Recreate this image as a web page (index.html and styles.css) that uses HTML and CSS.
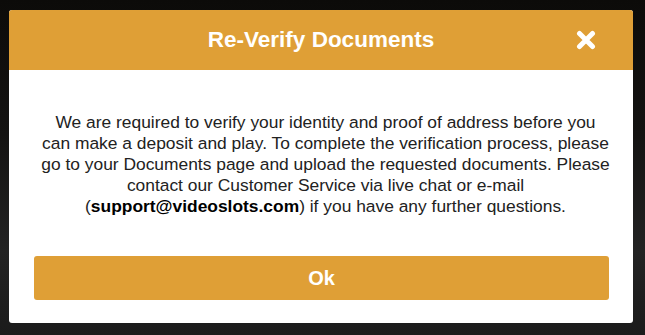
FILE: index.html
```html
<!DOCTYPE html>
<html>
<head>
<meta charset="utf-8">
<link rel="stylesheet" href="styles.css">
</head>
<body>
<div class="backdrop">
  <div class="modal">
    <div class="modal-header">
      <h1 class="modal-title">Re-Verify Documents</h1>
      <button class="close" aria-label="Close">
        <svg width="20" height="20" viewBox="0 0 20 20"><path d="M3.5 3.5 L16.5 16.5 M16.5 3.5 L3.5 16.5" stroke="#fff" stroke-width="5" stroke-linecap="round"/></svg>
      </button>
    </div>
    <div class="modal-body">
      <p class="message">We are required to verify your identity and proof of address before you<br>can make a deposit and play. To complete the verification process, please<br>go to your Documents page and upload the requested documents. Please<br>contact our Customer Service via live chat or e-mail<br>(<strong>support@videoslots.com</strong>) if you have any further questions.</p>
      <button class="ok">Ok</button>
    </div>
  </div>
</div>
</body>
</html>
```

FILE: styles.css
```css
html, body {
  margin: 0;
  padding: 0;
  height: 100%;
}
body {
  background: linear-gradient(180deg, #0c0b09 0%, #141312 40%, #232323 75%, #1b1b1b 100%);
  font-family: "Liberation Sans", Arial, sans-serif;
}
.backdrop {
  padding: 10px 12px 0 9px;
}
.modal {
  width: 624px;
  background: #fff;
  border-radius: 3px;
  overflow: hidden;
}
.modal-header {
  position: relative;
  height: 60px;
  background: #df9f36;
  display: flex;
  align-items: center;
  justify-content: center;
}
.modal-title {
  margin: 0;
  color: #fff;
  font-size: 22.5px;
  font-weight: bold;
}
.close {
  position: absolute;
  right: 37px;
  top: 20px;
  width: 20px;
  height: 20px;
  padding: 0;
  border: 0;
  background: none;
  display: flex;
}
.modal-body {
  padding: 42px 20px 23px 25px;
  display: flex;
  flex-direction: column;
}
.message {
  margin: 0 -4px 0 0;
  text-align: center;
  color: #222;
  font-size: 17.4px;
  line-height: 21px;
  white-space: nowrap;
}
.message strong {
  color: #000;
}
.ok {
  margin: 39px 4px 0 0;
  height: 44px;
  border: 0;
  border-radius: 3px;
  background: #df9f36;
  color: #fff;
  font-family: "Liberation Sans", Arial, sans-serif;
  font-size: 20px;
  font-weight: bold;
}
```
